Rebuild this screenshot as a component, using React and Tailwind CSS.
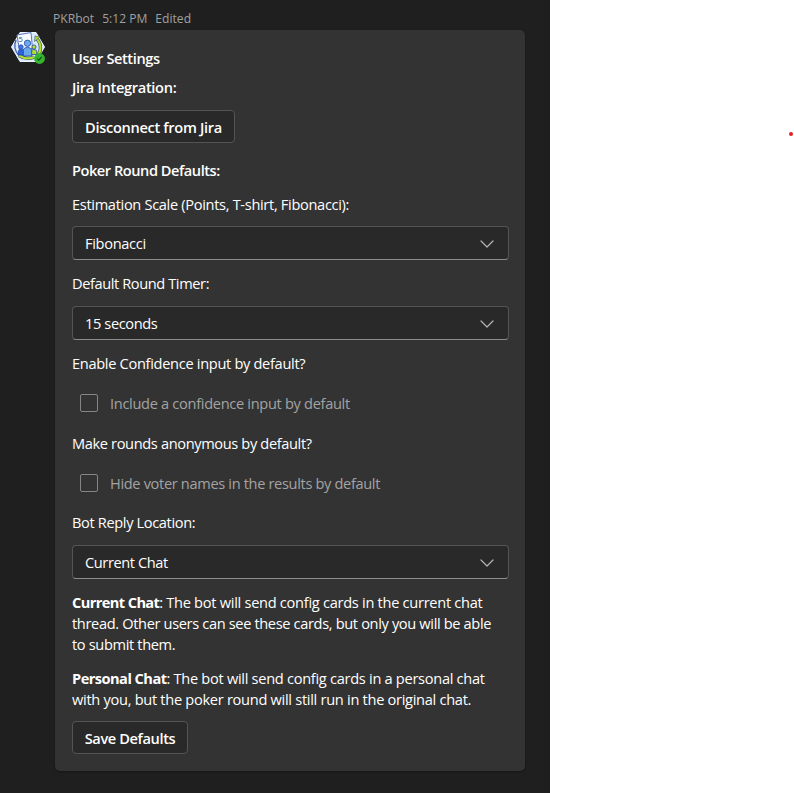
const label = "h-[21px] text-[14.6px] leading-[21px] whitespace-nowrap";

function Select({ value, className }) {
  return (
    <div className={`flex h-[34px] w-[437px] items-center justify-between rounded-[4px] border border-[#545454] border-b-[#8c8c8c] bg-[#292929] pt-[1px] pl-3 pr-[14px] ${className}`}>
      <span className="text-[14.6px] leading-[21px]">{value}</span>
      <svg className="h-[8px] w-[14px]" viewBox="0 0 14 8" fill="none" stroke="#b4b4b4" strokeWidth="1.2" strokeLinecap="round" strokeLinejoin="round">
        <path d="M1 1l6 6 6-6" />
      </svg>
    </div>
  );
}

function Check({ children, className }) {
  return (
    <div className={`flex h-[21px] items-center pl-2 text-[#a3a3a3] ${className}`}>
      <span className="mb-[1px] h-[18px] w-[18px] rounded-[2px] border border-[#858585]" />
      <span className="ml-[12px] text-[14.6px] leading-[21px] whitespace-nowrap">{children}</span>
    </div>
  );
}

function Avatar() {
  return (
    <div className="relative mt-[31px] ml-[11px] h-[34px] w-[35px] shrink-0">
      <svg className="h-[33px] w-[34px]" viewBox="0 0 34 33">
        <path d="M9 1.5h16L33.5 16 25 30.5H9L.5 16z" fill="#d8e9fb" stroke="#eef6ff" strokeWidth="1" strokeLinejoin="round" />
        <path d="M5 9A14 14 0 0 0 8 24.5" fill="none" stroke="#3c5db0" strokeWidth="1.4" />
        <path d="M6 4l14-2.500 1.500 16-13 2z" fill="#f8fbff" stroke="#5a78bd" strokeWidth="1" />
        <path d="M25 7C30.500 12 31 20 26 25M8 24.5c5 3 11 3.500 15 1.500" fill="none" stroke="#324c80" strokeWidth="3.4" />
        <path d="M25 7C30.500 12 31 20 26 25M8 24.5c5 3 11 3.500 15 1.500" fill="none" stroke="#b5df27" strokeWidth="2.2" />
        <path d="M23.500 10.500l.5-5.500 5 1z" fill="#b5df27" stroke="#324c80" strokeWidth=".6" />
        <text x="7.500" y="10.800" fontFamily="Open Sans, sans-serif" fontSize="7.500" fill="#283f8f">5</text>
        <g stroke="#21489d" strokeWidth=".8">
          <circle cx="10" cy="16" r="2.200" fill="#3d78ef" />
          <path d="M7.300 24V20.500q0-2 2.700-2t3 2V24z" fill="#2d63e9" />
          <circle cx="23" cy="16" r="2.100" fill="#b5df27" />
          <path d="M20 23.500V20.500q0-2 3-2t2.700 2v3z" fill="#b5df27" />
          <circle cx="16.500" cy="12.300" r="3.200" fill="#69a9ee" />
          <path d="M12.300 25V19.500q0-3 4.200-3t4.200 3V25z" fill="#69a9ee" />
        </g>
      </svg>
      <svg className="absolute top-[22px] left-[23px] h-[11px] w-[11px]" viewBox="0 0 11 11">
        <circle cx="5.500" cy="5.500" r="5.400" fill="#35b52f" />
        <path d="M3.300 5.700l1.500 1.400L7.700 4" fill="none" stroke="#164f18" strokeWidth="1.200" />
      </svg>
    </div>
  );
}

export default function App() {
  return (
    <div className="flex h-[793px] w-[794px] overflow-hidden bg-white font-['Open_Sans','Noto_Sans',sans-serif]">
      <main className="flex h-full w-[550px] shrink-0 bg-[#1f1f1f]">
        <Avatar />
        <div className="ml-[9px] w-[470px]">
          <header className="-ml-[2px] flex h-[30px] items-start gap-2 pt-[10px] text-[12.1px] leading-[18px] text-[#a0a0a0]">
            <span>PKRbot</span>
            <span>5:12 PM</span>
            <span>Edited</span>
          </header>
          <section className="h-[741px] rounded-[5px] bg-[#333333] pt-[18px] pl-[17px] text-white shadow-[0_1px_2px_rgba(0,0,0,0.3)]">
            <h1 className={`${label} font-semibold tracking-[-0.41px]`}>User Settings</h1>
            <h2 className={`${label} mt-2 font-semibold tracking-[-0.32px]`}>Jira Integration:</h2>
            <button className="mt-3 flex h-[33px] w-[163px] items-center justify-center rounded-[4px] border border-[#545454] bg-[#292929] pt-[2px] text-[14.6px] font-semibold whitespace-nowrap tracking-[-0.32px]">Disconnect from Jira</button>
            <h2 className={`${label} mt-[17px] font-semibold tracking-[-0.46px]`}>Poker Round Defaults:</h2>
            <p className={`${label} mt-[13px] tracking-[-0.32px]`}>Estimation Scale (Points, T-shirt, Fibonacci):</p>
            <Select value="Fibonacci" className="mt-[11px] tracking-[-0.32px]" />
            <p className={`${label} mt-[13px] tracking-[-0.4px]`}>Default Round Timer:</p>
            <Select value="15 seconds" className="mt-[12px] tracking-[-0.38px]" />
            <p className={`${label} mt-[13px] tracking-[-0.31px]`}>Enable Confidence input by default?</p>
            <Check className="mt-[19px] tracking-[-0.31px]">Include a confidence input by default</Check>
            <p className={`${label} mt-[19px] tracking-[-0.36px]`}>Make rounds anonymous by default?</p>
            <Check className="mt-[19px] tracking-[-0.34px]">Hide voter names in the results by default</Check>
            <p className={`${label} mt-[18px] tracking-[-0.36px]`}>Bot Reply Location:</p>
            <Select value="Current Chat" className="mt-[12px] tracking-[-0.41px]" />
            <p className="mt-[13px] text-[14.6px] leading-[21px] whitespace-nowrap tracking-[-0.35px]">
              <b className="tracking-[-0.6px]">Current Chat</b>: <span className="tracking-[-0.28px]">The bot will send config cards in the current chat</span><br />
              thread. Other users can see these cards, but only you will be able<br />
              to submit them.
            </p>
            <p className="mt-[13px] text-[14.6px] leading-[21px] whitespace-nowrap tracking-[-0.29px]">
              <b className="tracking-[-0.53px]">Personal Chat</b>: The bot will send config cards in a personal chat<br />
              with you, but the poker round will still run in the original chat.
            </p>
            <button className="mt-[11px] flex h-[33px] w-[116px] items-center justify-center rounded-[4px] border border-[#545454] bg-[#292929] pt-[2px] text-[14.6px] font-semibold whitespace-nowrap tracking-[-0.38px]">Save Defaults</button>
          </section>
        </div>
      </main>
      <aside className="flex flex-1 justify-end pt-[132px] pr-[1px]">
        <span className="h-[4px] w-[4px] rounded-full bg-[#ed1c24]" />
      </aside>
    </div>
  );
}
